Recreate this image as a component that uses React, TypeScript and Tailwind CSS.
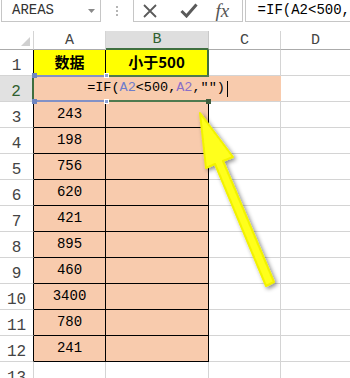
const mono = { fontFamily: '"Liberation Mono", "DejaVu Sans Mono", monospace' };

const values = ["243", "198", "756", "620", "421", "895", "460", "3400", "780", "241"];

function RowHead({ n, active = false, edge = "border-black" }: { n: number; active?: boolean; edge?: string }) {
  return (
    <div
      className={`w-[34px] shrink-0 h-full flex items-end justify-center pb-[1px] border-r border-b border-b-[#d4d4d4] text-[16px] leading-none ${
        active ? "bg-[#e1e1e1] text-[#2f5f2f]" : "bg-white text-[#444]"
      } ${edge}`}
    >
      {n}
    </div>
  );
}

function Arrow() {
  return (
    <svg className="absolute left-0 top-0 pointer-events-none" width="350" height="378">
      <defs>
        <filter id="sh" x="-20%" y="-20%" width="140%" height="140%">
          <feDropShadow dx="2" dy="2" stdDeviation="2" floodColor="#000" floodOpacity="0.45" />
        </filter>
      </defs>
      <g filter="url(#sh)">
        <polygon
          points="200,113 233,157 223,161 274,282 266,286 215,164 206,168"
          fill="#ffff1a"
          stroke="#f2f200"
          strokeWidth="2"
          strokeLinejoin="round"
        />
      </g>
    </svg>
  );
}

export default function App() {
  return (
    <div className="relative w-[350px] h-[378px] overflow-hidden bg-white text-black" style={mono}>
      {/* formula bar */}
      <div className="flex h-[22px]">
        <div className="ml-[1px] w-[103px] flex items-center justify-between border-x border-b border-[#c6c6c6] pl-[10px] pr-[5px]">
          <span className="text-[14px] text-[#333]">AREAS</span>
          <svg width="7" height="4" viewBox="0 0 7 4">
            <polygon points="0,0 7,0 3.5,4" fill="#8a8a8a" />
          </svg>
        </div>
        <div className="w-[33px] flex flex-col items-center justify-center gap-[2px]">
          <span className="w-[2px] h-[2px] bg-[#b5b5b5]" />
          <span className="w-[2px] h-[2px] bg-[#b5b5b5]" />
          <span className="w-[2px] h-[2px] bg-[#b5b5b5]" />
        </div>
        <div className="w-[114px] flex items-center border-x border-b border-[#c6c6c6] pl-[8px] gap-[22px]">
          <svg width="16" height="16" viewBox="0 0 16 16">
            <path d="M2 2 L14 14 M14 2 L2 14" stroke="#5a5a5a" strokeWidth="1.8" />
          </svg>
          <svg width="18" height="15" viewBox="0 0 18 15">
            <path d="M1.5 8 L6.5 13 L16.5 1.5" stroke="#5a5a5a" strokeWidth="3" fill="none" />
          </svg>
          <span
            className="text-[19px] italic text-[#555] leading-none -ml-[4px]"
            style={{ fontFamily: '"Liberation Serif", serif' }}
          >
            fx
          </span>
        </div>
        <div className="ml-[2px] flex-1 flex items-center border-l border-b border-[#c6c6c6] pl-[12px] text-[14px] whitespace-nowrap">
          =IF(A2&lt;500,
        </div>
      </div>

      <div className="h-[9px]" />

      {/* column headers */}
      <div className="flex h-[19px] text-[15px] text-[#444] leading-none">
        <div className="w-[34px] shrink-0 relative border-r border-b border-[#d4d4d4] border-b-[#ababab]">
          <svg className="absolute right-[3px] bottom-[3px]" width="9" height="9" viewBox="0 0 9 9">
            <polygon points="9,0 9,9 0,9" fill="#d0d0d0" />
          </svg>
        </div>
        <div className="w-[72px] shrink-0 flex items-center justify-center border-r border-b border-[#d4d4d4] border-b-[#ababab]">
          A
        </div>
        <div className="w-[103px] shrink-0 flex items-center justify-center bg-[#dedede] border-r border-r-[#c8c8c8] border-b-2 border-b-[#3f6f3f] text-[#2f5f2f]">
          B
        </div>
        <div className="w-[72px] shrink-0 flex items-center justify-center border-r border-b border-[#d4d4d4] border-b-[#ababab]">
          C
        </div>
        <div className="flex-1 flex items-center justify-center border-b border-b-[#ababab]">D</div>
      </div>

      {/* row 1 */}
      <div className="flex h-[26px]">
        <RowHead n={1} />
        <div
          className="w-[72px] shrink-0 flex items-center justify-center bg-[#ffff00] border-r border-b border-black text-[15px] font-bold"
          style={{ fontFamily: '"Noto Sans CJK SC", "Noto Sans", sans-serif' }}
        >
          数据
        </div>
        <div
          className="w-[103px] shrink-0 flex items-center justify-center bg-[#ffff00] border-r-2 border-b border-r-[#3f6f3f] border-b-black text-[15px] font-bold"
          style={{ fontFamily: '"Noto Sans CJK SC", "Noto Sans", sans-serif' }}
        >
          小于500
        </div>
        <div className="w-[72px] shrink-0 border-r border-b border-[#d4d4d4]" />
        <div className="flex-1 border-b border-[#d4d4d4]" />
      </div>

      {/* row 2 (editing) */}
      <div className="flex h-[26px]">
        <RowHead n={2} active edge="border-r-2 border-r-[#3f6f3f]" />
        <div className="relative w-[247px] shrink-0 flex items-center justify-center bg-[#f8cbad] border-b border-[#d4d4d4] text-[13.5px] whitespace-nowrap">
          <span>=IF(</span>
          <span className="text-[#6f7dcc]">A2</span>
          <span>&lt;500,</span>
          <span className="text-[#8a6fc8]">A2</span>
          <span>,&quot;&quot;)</span>
          <span className="ml-[2px] w-[1px] h-[16px] bg-black" />
          {/* range outlines */}
          <span className="absolute left-0 top-[-1px] w-[72px] h-[2px] bg-[#8291c6]" />
          <span className="absolute left-[72px] top-[-1px] w-[103px] h-[2px] bg-[#4f7a4f]" />
          <span className="absolute left-0 bottom-[-1px] w-[72px] h-[2px] bg-[#8291c6]" />
          <span className="absolute left-[72px] bottom-[-1px] w-[103px] h-[2px] bg-[#4f7a4f]" />
          <span className="absolute left-[-2px] top-[-3px] w-[5px] h-[5px] bg-[#6f86c0]" />
          <span className="absolute left-[70px] top-[-3px] w-[5px] h-[5px] bg-[#8fa3d6] border border-white" />
          <span className="absolute left-[-2px] bottom-[-3px] w-[5px] h-[5px] bg-[#6f86c0]" />
          <span className="absolute left-[70px] bottom-[-3px] w-[5px] h-[5px] bg-[#8fa3d6] border border-white" />
          <span className="absolute left-[172px] bottom-[-3px] w-[5px] h-[5px] bg-[#3f5f3f]" />
        </div>
        <div className="flex-1 border-b border-[#d4d4d4]" />
      </div>

      {/* rows 3-12 */}
      {values.map((v, i) => (
        <div key={v + i} className="flex h-[26px]">
          <RowHead n={i + 3} />
          <div className="w-[72px] shrink-0 flex items-center justify-center bg-[#f8cbad] border-r border-b border-black text-[14px]">
            {v}
          </div>
          <div className="w-[103px] shrink-0 bg-[#f8cbad] border-r border-b border-black" />
          <div className="w-[72px] shrink-0 border-r border-b border-[#d4d4d4]" />
          <div className="flex-1 border-b border-[#d4d4d4]" />
        </div>
      ))}

      {/* row 13 */}
      <div className="flex h-[26px]">
        <RowHead n={13} edge="border-r-[#d4d4d4]" />
        <div className="w-[72px] shrink-0 border-r border-[#d4d4d4]" />
        <div className="w-[103px] shrink-0 border-r border-[#d4d4d4]" />
        <div className="w-[72px] shrink-0 border-r border-[#d4d4d4]" />
        <div className="flex-1" />
      </div>

      <Arrow />
    </div>
  );
}
